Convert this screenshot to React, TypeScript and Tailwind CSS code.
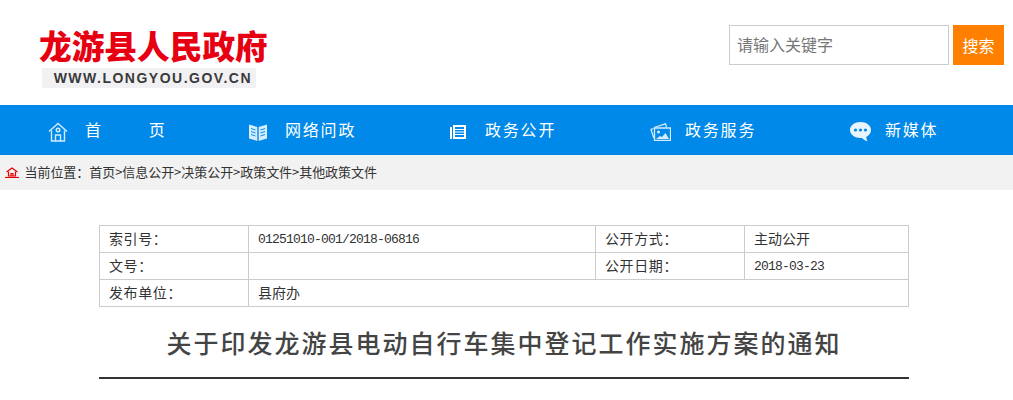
const cjk = "font-['Noto_Sans_CJK_SC',sans-serif]";

function HomeIcon() {
  return (
    <svg width="20" height="20" viewBox="0 0 20 20" fill="none" stroke="#d6ecff" strokeWidth="1.4">
      <path d="M1 9.5 10 1.5l9 8" />
      <path d="M3.5 8.5v10.5h13V8.5" />
      <circle cx="10" cy="8" r="1.8" />
      <path d="M7.5 19v-6h5v6" />
    </svg>
  );
}

function BookIcon() {
  return (
    <svg className="ml-[1px]" width="18" height="18" viewBox="0 0 18 18" fill="#d6ecff">
      <path d="M0 1.5 8.3 4v14L0 15.5z" />
      <path d="M18 1.5 9.7 4v14l8.3-2.5z" />
      <g stroke="#0089e8" strokeWidth="1" fill="none">
        <path d="M2 5.5 6.5 7M2 8.5 6.5 10M2 11.5 6.5 13M16 5.5 11.5 7M16 8.5 11.5 10M16 11.5 11.5 13" />
      </g>
    </svg>
  );
}

function ListIcon() {
  return (
    <svg className="ml-[2px]" width="16" height="14" viewBox="0 0 16 14" fill="#fff">
      <path d="M0 2h2v12H0z" />
      <path d="M3 0h13v14H3zM5 2v2h9V2zm0 3v1.500h9V5zm0 2.500V9h9V7.500zm0 2.500v2h9v-2z" fillRule="evenodd" />
    </svg>
  );
}

function PhotoIcon() {
  return (
    <svg className="ml-[2px]" width="21" height="18" viewBox="0 0 21 18" fill="none" stroke="#d6ecff" strokeWidth="1.3">
      <path d="M3.500 5.500 1 6.500 3.800 15M4 4.500 15.500.8 16.500 4" />
      <path d="M4.500 5h16v12.500h-16z" />
      <circle cx="8.500" cy="9" r="1.500" fill="#d6ecff" stroke="none" />
      <path d="M6 16l4-3 2 1 3.500-4 3.500 6z" fill="#d6ecff" stroke="none" />
    </svg>
  );
}

function ChatIcon() {
  return (
    <svg className="ml-[2px]" width="21" height="20" viewBox="0 0 21 20" fill="#e8f5ff">
      <path d="M10.500 0C16.300 0 21 3.500 21 8c0 3.300-2.300 5.800-4.800 7 .2 1.600.6 3 1.200 4.500-2-.8-4-2.500-5.400-3.600-.5.100-1 .100-1.500.100C4.700 16 0 12.500 0 8s4.700-8 10.500-8z" />
      <circle cx="5.500" cy="8" r="1.600" fill="#0089e8" />
      <circle cx="10.500" cy="8" r="1.600" fill="#0089e8" />
      <circle cx="15.500" cy="8" r="1.600" fill="#0089e8" />
    </svg>
  );
}

function CrumbIcon() {
  return (
    <svg width="14" height="11" viewBox="0 0 14 11" fill="none" stroke="#e60000" strokeWidth="1.200">
      <path d="M1.500 5 7 1l5.500 4" />
      <path d="M3.500 4.500V9h7V4.500M6 9V6.500h2V9" />
      <path d="M0 10.500h14" />
    </svg>
  );
}

const navItems = [
  { label: "首", label2: "页", icon: HomeIcon },
  { label: "网络问政", icon: BookIcon },
  { label: "政务公开", icon: ListIcon },
  { label: "政务服务", icon: PhotoIcon },
  { label: "新媒体", icon: ChatIcon },
];

const cell = "border border-[#cccccc] text-[#333333]";
const labelCell = `${cell} pl-[9px] pb-[2px] text-[14px] tracking-[0.6px]`;
const valueCell = `${cell} pl-[9px] pb-[2px] text-[14px]`;
const numberCell = `${cell} pl-[9px] pt-[1px] font-['Liberation_Mono',monospace] text-[13px] tracking-[-0.8px]`;

export default function App() {
  return (
    <div className={`${cjk} w-[1013px] bg-white`}>
      <header className="flex h-[105px] justify-between pr-[9px]">
        <div className="flex flex-col pl-[39px] pt-[23px]">
          <h1 className="text-[32.7px] leading-[44px] font-black whitespace-nowrap text-[#e60012]">龙游县人民政府</h1>
          <div className="mt-[1px] ml-[3px] flex h-[20px] w-[214px] items-center justify-end bg-[#f1f1f3] pr-[4px] font-['Liberation_Sans',sans-serif] text-[14px] font-bold tracking-[1.5px] whitespace-nowrap text-[#3a3a3a]">
            WWW.LONGYOU.GOV.CN
          </div>
        </div>
        <form className="flex items-start gap-[4px] pt-[25px]">
          <input
            className="h-[40px] w-[220px] border border-[#cccccc] pb-[2px] pl-[7px] text-[16px] outline-none placeholder:text-[#777777]"
            placeholder="请输入关键字"
          />
          <button type="button" className="h-[40px] w-[51px] bg-[#ff8000] text-[16px] text-white">
            搜索
          </button>
        </form>
      </header>

      <nav className="grid h-[50px] grid-cols-[repeat(5,200px)] bg-[#0089e8] pl-[48px]">
        {navItems.map((item) => {
          const Icon = item.icon;
          return (
            <div key={item.label} className="flex items-center text-white">
              <span className="mt-[3px] flex w-[37px] items-center">
                <Icon />
              </span>
              <span className="mb-[2px] text-[16px] tracking-[1.800px]">{item.label}</span>
              {item.label2 && <span className="mb-[2px] ml-[46px] text-[16px]">{item.label2}</span>}
            </div>
          );
        })}
      </nav>

      <div className="flex h-[35px] items-center bg-[#f2f2f2] pl-[5px] text-[13px] text-[#333333]">
        <CrumbIcon />
        <span className="mb-[2px] ml-[5.500px] tracking-[-0.05px] whitespace-nowrap">当前位置：首页&gt;信息公开&gt;决策公开&gt;政策文件&gt;其他政策文件</span>
      </div>

      <main className="ml-[99px] w-[810px] pt-[35px]">
        <table className="w-[809px] table-fixed border-collapse">
          <colgroup>
            <col className="w-[149px]" />
            <col className="w-[347px]" />
            <col className="w-[149px]" />
            <col className="w-[164px]" />
          </colgroup>
          <tbody>
            <tr className="h-[27px]">
              <td className={labelCell}>索引号：</td>
              <td className={numberCell}>01251010-001/2018-06816</td>
              <td className={labelCell}>公开方式：</td>
              <td className={valueCell}>主动公开</td>
            </tr>
            <tr className="h-[27px]">
              <td className={labelCell}>文号：</td>
              <td className={valueCell}></td>
              <td className={labelCell}>公开日期：</td>
              <td className={numberCell}>2018-03-23</td>
            </tr>
            <tr className="h-[27px]">
              <td className={labelCell}>发布单位：</td>
              <td className={valueCell} colSpan={3}>
                县府办
              </td>
            </tr>
          </tbody>
        </table>
        <h2 className="mt-[15px] border-b-2 border-[#333333] pb-[15px] text-center text-[25px] leading-[40px] font-medium tracking-[2px] text-[#444444]">
          关于印发龙游县电动自行车集中登记工作实施方案的通知
        </h2>
      </main>
    </div>
  );
}
